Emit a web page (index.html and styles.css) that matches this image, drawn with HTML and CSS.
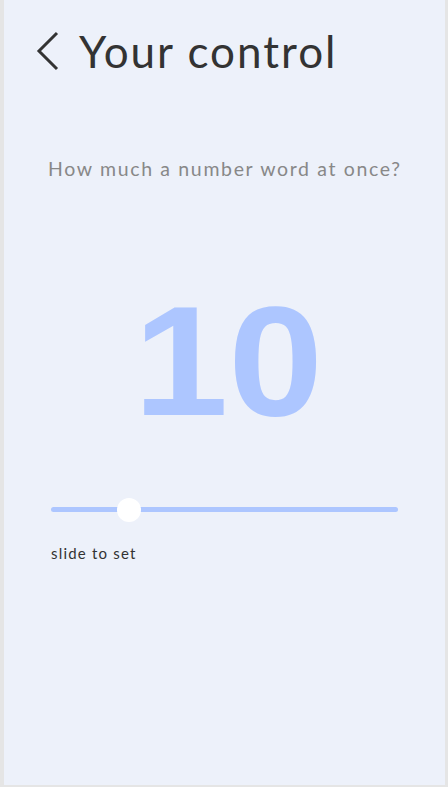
FILE: index.html
```html
<!DOCTYPE html>
<html>
<head>
<meta charset="utf-8">
<link rel="stylesheet" href="styles.css">
</head>
<body>
<div class="panel">
  <header class="header">
    <svg class="back" width="24" height="40" viewBox="0 0 24 40"><path d="M21 2 L3 20 L21 38" fill="none" stroke="#333" stroke-width="3"/></svg>
    <h1 class="title">Your control</h1>
  </header>
  <p class="question">How much a number word at once?</p>
  <div class="number"><span class="digits">10</span></div>
  <div class="slider">
    <div class="track"></div>
    <div class="thumb" style="left:78px"></div>
  </div>
  <p class="hint">slide to set</p>
</div>
</body>
</html>
```
FILE: styles.css
```css
html, body { margin: 0; padding: 0; }
body {
  background: #e5e5e5;
  width: 448px;
  height: 787px;
  font-family: "Lato", "Open Sans", sans-serif;
}
.panel {
  margin-left: 4px;
  width: 441px;
  height: 785px;
  background: #edf1fa;
  display: flex;
  flex-direction: column;
}
.header {
  display: flex;
  align-items: center;
  padding: 30px 0 0 32px;
  height: 42px;
}
.back { display: block; margin-right: 19px; }
.title {
  margin: 0;
  font-weight: 400;
  font-size: 44px;
  color: #333;
  letter-spacing: 2px;
}
.question {
  margin: 85px 0 0 44px;
  font-size: 19.5px;
  letter-spacing: 1.65px;
  color: #888;
}
.number {
  margin-top: 104px;
  text-align: center;
  font-family: "Liberation Sans", Arial, sans-serif;
  font-weight: 700;
  font-size: 155px;
  line-height: 1;
  color: #adc6ff;
  padding-left: 8px;
}
.digits {
  display: inline-block;
  transform: scaleX(1.1);
}
.slider {
  position: relative;
  margin: 59px 0 0 47px;
  width: 347px;
  height: 24px;
}
.track {
  position: absolute;
  left: 0; right: 0; top: 9px;
  height: 5px;
  border-radius: 3px;
  background: #adc6ff;
}
.thumb {
  position: absolute;
  top: 0;
  width: 24px;
  height: 24px;
  border-radius: 50%;
  background: #fff;
  transform: translateX(-12px);
}
.hint {
  margin: 22px 0 0 47px;
  font-size: 15px;
  letter-spacing: 1.2px;
  color: #333;
}
```
